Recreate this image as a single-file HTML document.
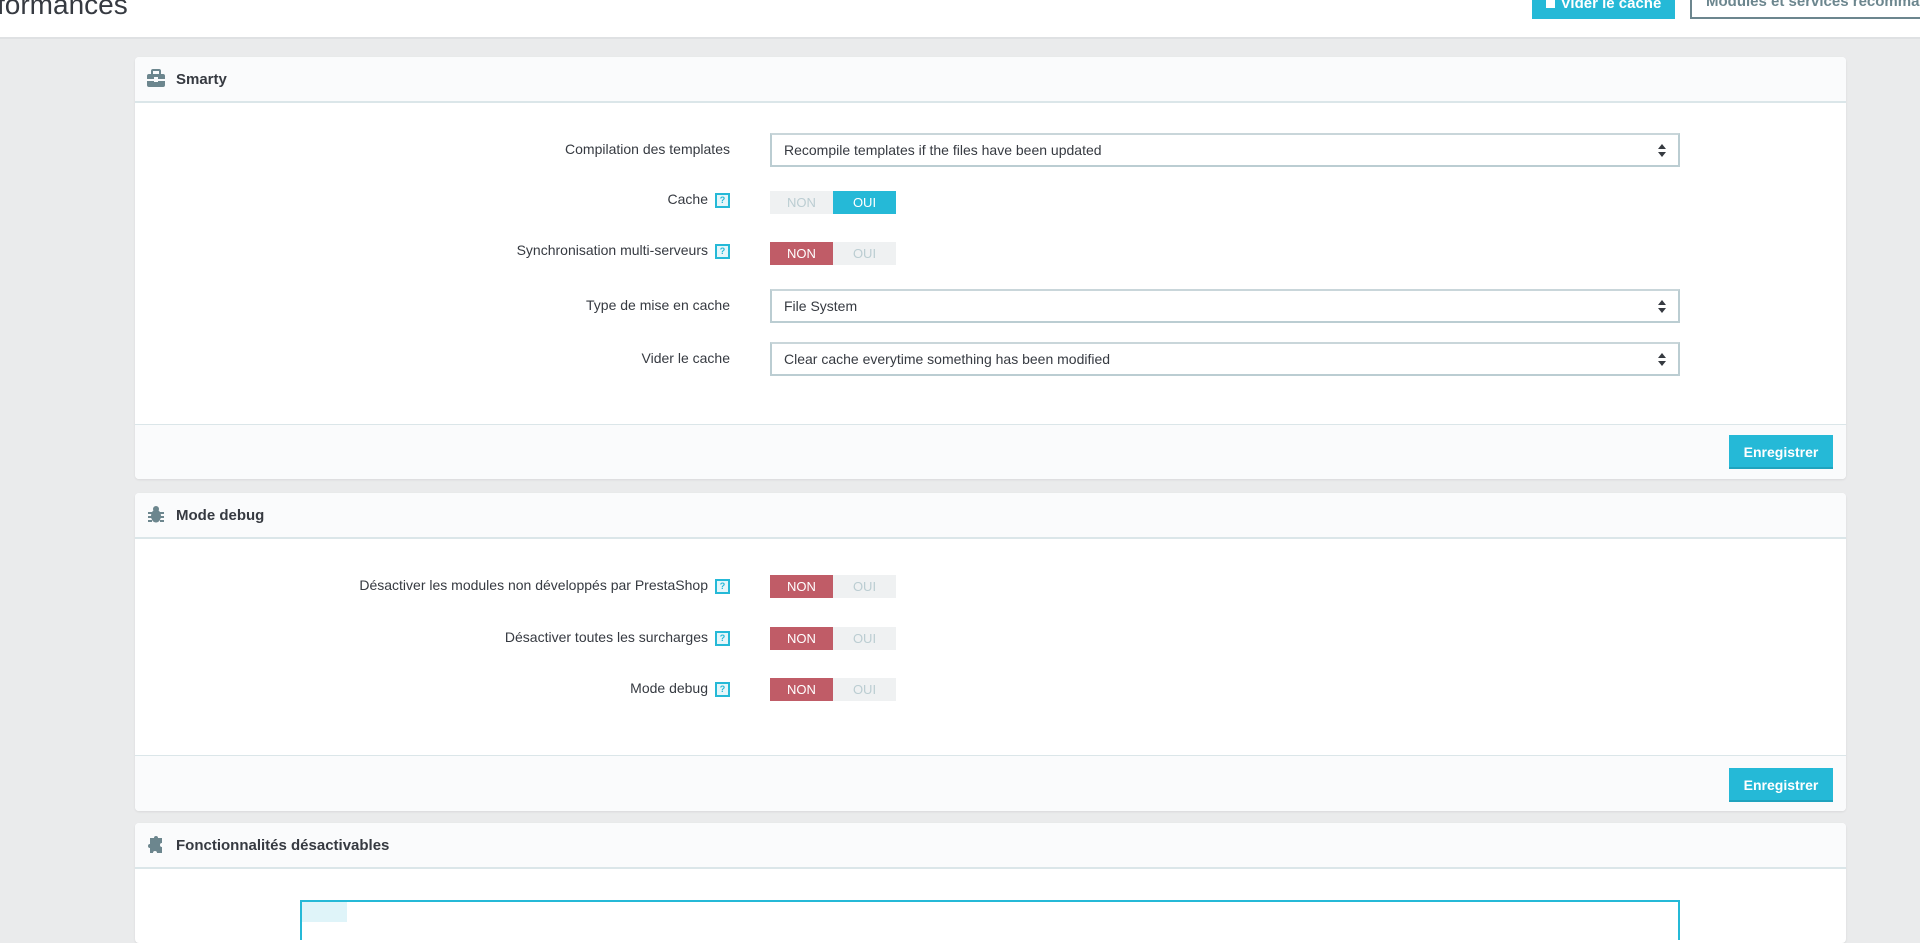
<!DOCTYPE html>
<html><head><meta charset="utf-8"><style>
*{box-sizing:border-box;margin:0;padding:0}
body{width:1920px;height:908px;overflow:hidden;background:#eaebec;font-family:"Liberation Sans",sans-serif;color:#363a41;position:relative}
.abs{position:absolute}
.hdr{left:0;top:0;width:1920px;height:39px;background:#fff;border-bottom:2px solid #dfe1e3}
.panel{position:absolute;left:135px;width:1711px;background:#fff;border-radius:4px;box-shadow:0 1px 2px rgba(0,0,0,.08)}
.ph{position:absolute;left:0;top:0;width:100%;height:46px;background:#fafbfc;border-bottom:2px solid #dbe6e9;border-radius:4px 4px 0 0}
.ph span{position:absolute;left:41px;top:14px;font-size:15px;font-weight:bold;color:#363a41}
.ph svg{position:absolute;left:11px;top:12px}
.pf{position:absolute;left:0;width:100%;background:#fafbfc;border-top:1px solid #dbe6e9;border-radius:0 0 4px 4px}
.btn{position:absolute;right:13px;width:104px;height:34px;background:#25b9d7;color:#fff;font-size:14px;font-weight:bold;text-align:center;line-height:34px;border-bottom:2px solid #1fa3be}
.lbl{position:absolute;right:1116px;font-size:14px;color:#363a41;white-space:nowrap;text-align:right}
.help{display:inline-block;width:15px;height:15px;border:2px solid #25b9d7;background:#e6f6fa;color:#25b9d7;font-size:9px;line-height:11px;text-align:center;margin-left:7px;vertical-align:middle;font-weight:bold}
.sel{position:absolute;left:635px;width:910px;height:34px;border:2px solid #bbcdd2;border-top-color:#c9d6da;font-size:14px;line-height:30px;padding-left:12px;color:#363a41}
.sel:after{content:"";position:absolute;right:12px;top:9px;border:4px solid transparent;border-bottom:5px solid #363a41;border-top:none}
.sel:before{content:"";position:absolute;right:12px;top:17px;border:4px solid transparent;border-top:5px solid #363a41;border-bottom:none}
.tg{position:absolute;left:635px;width:126px;height:23px;background:#eff1f2;font-size:13px;line-height:23px}
.tg div{position:absolute;top:0;width:63px;height:23px;text-align:center;color:#bbcdd2}
.tg .a{left:0}.tg .b{left:63px}
.tg .red{background:#c05c67;color:#fff}
.tg .blue{background:#25b9d7;color:#fff}
</style></head><body>
<div class="abs hdr"></div>
<div class="abs" style="left:-3px;top:-11px;font-size:28px;color:#363a41">formances</div>
<div class="abs" style="left:1532px;top:0;width:143px;height:19px;background:#25b9d7;color:#fff;font-size:15px;font-weight:bold;line-height:6px;text-align:center;overflow:hidden"><span style="display:inline-block;width:9px;height:8px;background:#fff;margin-right:6px"></span>Vider le cache</div>
<div class="abs" style="left:1690px;top:0;width:240px;height:19px;border:2px solid #6c868e;border-top:none;color:#6c868e;font-size:15px;font-weight:bold;line-height:4px;padding-left:14px;overflow:hidden;white-space:nowrap">Modules et services recommandés</div>

<div class="panel" style="top:57px;height:422px">
 <div class="ph"><svg width="20" height="20" viewBox="0 0 20 20"><rect x="6" y="1" width="8" height="5" rx="1" fill="none" stroke="#6c868e" stroke-width="2"/><rect x="1" y="5" width="18" height="13" rx="2" fill="#6c868e"/><rect x="1" y="10" width="18" height="2" fill="#fafbfc"/><rect x="8" y="8" width="4" height="5" fill="#fafbfc"/></svg><span>Smarty</span></div>
 <div class="lbl" style="top:84px">Compilation des templates</div>
 <div class="sel" style="top:76px">Recompile templates if the files have been updated</div>
 <div class="lbl" style="top:134px">Cache<span class="help">?</span></div>
 <div class="tg" style="top:134px"><div class="a">NON</div><div class="b blue">OUI</div></div>
 <div class="lbl" style="top:185px">Synchronisation multi-serveurs<span class="help">?</span></div>
 <div class="tg" style="top:185px"><div class="a red">NON</div><div class="b">OUI</div></div>
 <div class="lbl" style="top:240px">Type de mise en cache</div>
 <div class="sel" style="top:232px">File System</div>
 <div class="lbl" style="top:293px">Vider le cache</div>
 <div class="sel" style="top:285px">Clear cache everytime something has been modified</div>
 <div class="pf" style="top:367px;height:55px"><div class="btn" style="top:10px">Enregistrer</div></div>
</div>

<div class="panel" style="top:493px;height:318px">
 <div class="ph"><svg width="20" height="20" viewBox="0 0 20 20"><ellipse cx="10" cy="11" rx="5" ry="6.5" fill="#6c868e"/><circle cx="10" cy="4" r="3" fill="#6c868e"/><path d="M2 8h4M2 12h4M2 16h4M14 8h4M14 12h4M14 16h4" stroke="#6c868e" stroke-width="2"/></svg><span>Mode debug</span></div>
 <div class="lbl" style="top:84px">Désactiver les modules non développés par PrestaShop<span class="help">?</span></div>
 <div class="tg" style="top:82px"><div class="a red">NON</div><div class="b">OUI</div></div>
 <div class="lbl" style="top:136px">Désactiver toutes les surcharges<span class="help">?</span></div>
 <div class="tg" style="top:134px"><div class="a red">NON</div><div class="b">OUI</div></div>
 <div class="lbl" style="top:187px">Mode debug<span class="help">?</span></div>
 <div class="tg" style="top:185px"><div class="a red">NON</div><div class="b">OUI</div></div>
 <div class="pf" style="top:262px;height:56px"><div class="btn" style="top:12px">Enregistrer</div></div>
</div>

<div class="panel" style="top:823px;height:120px">
 <div class="ph"><svg width="20" height="20" viewBox="0 0 20 20"><path d="M4 3h4a2 2 0 1 1 4 0h4v5a2 2 0 1 0 0 4v6H11a2 2 0 1 0-4 0H4v-5a2 2 0 1 1 0-4z" fill="#6c868e"/></svg><span>Fonctionnalités désactivables</span></div>
 <div class="abs" style="left:165px;top:77px;width:1380px;height:40px;border:2px solid #25b9d7;border-bottom:none"><div style="width:45px;height:20px;background:#dff4f9"></div></div>
</div>
</body></html>
